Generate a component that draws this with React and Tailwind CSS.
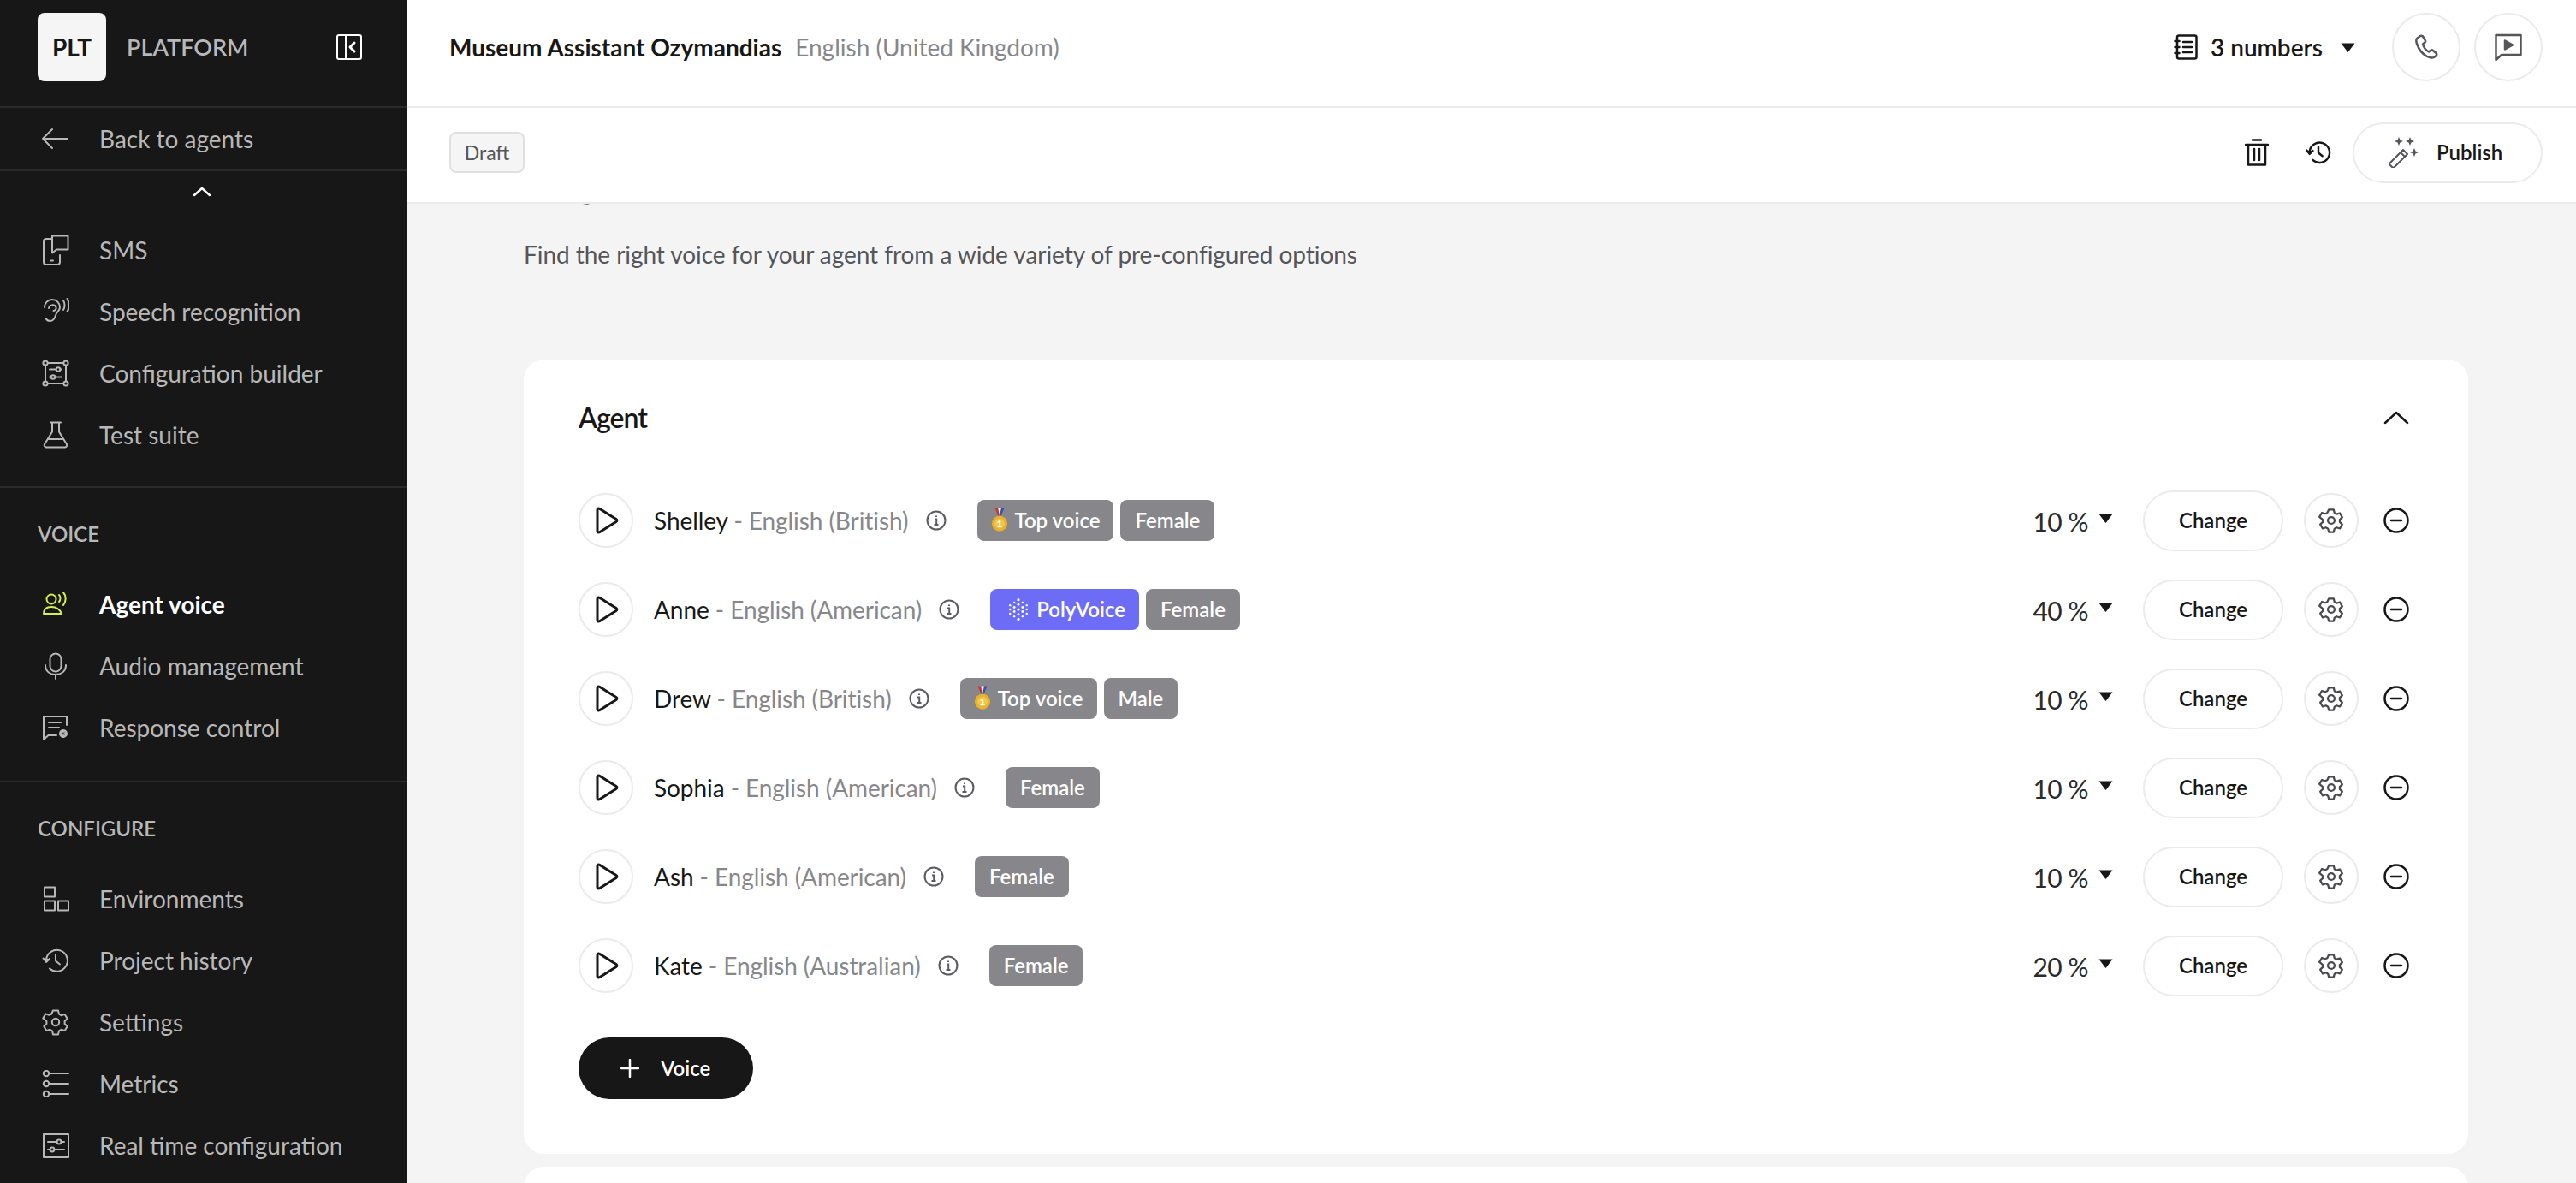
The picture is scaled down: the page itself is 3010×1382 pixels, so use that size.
const Ic = ({ w = 32, h = 32, vb, className = "", sw = 2, children }) => (
  <svg width={w} height={h} viewBox={vb || `0 0 ${w} ${h}`} fill="none" stroke="currentColor" strokeWidth={sw} strokeLinecap="round" strokeLinejoin="round" className={"shrink-0 " + className}>
    {children}
  </svg>
);

const Cog = ({ size = 32, sw = 2 }) => (
  <Ic w={size} h={size} vb="0 0 32 32" sw={sw}>
    <path d="M13 2.500h6l1 4.200 2.600 1.500 4.100-1.300 3 5.200-3.100 2.900v3l3.100 2.900-3 5.200-4.100-1.300-2.600 1.500-1 4.200h-6l-1-4.200-2.600-1.500-4.100 1.300-3-5.200 3.100-2.900v-3L1.300 11.600l3-5.200 4.100 1.300L11 6.700z" />
    <circle cx="16" cy="16" r="4.200" />
  </Ic>
);
const HistoryI = ({ size = 32, sw = 2 }) => (
  <Ic w={size} h={size} vb="0 0 32 32" sw={sw}>
    <path d="M5 15a12.500 12.500 0 1 1 4 10.500" />
    <path d="M1.500 13.500 5 18l4-4" fill="currentColor" />
    <path d="M16 9v7.500l5 4" />
  </Ic>
);

const navIcons = {
  sms: (
    <Ic vb="0 0 32 36" h={36}>
      <path d="M11 5H5a3 3 0 0 0-3 3v24a3 3 0 0 0 3 3h13a3 3 0 0 0 3-3v-8" />
      <path d="M12 1.500h18.500v16H17l-5 4z" />
      <path d="M10 30.500h3" />
    </Ic>
  ),
  ear: (
    <Ic>
      <path d="M3 11a9 9 0 0 1 18 0c0 4-3.500 5.500-4.500 8-1 3-2 8-7 8-2.500 0-4-1-5-3" />
      <path d="M8 12a4.500 4.500 0 0 1 8.500-1c.8 2-1 3.500-3 4" />
      <path d="M25 3c2 3 2 8 0 11" />
      <path d="M29.500 1c3 4.500 3 11 0 15" />
    </Ic>
  ),
  config: (
    <Ic>
      <rect x="4" y="4" width="24" height="24" />
      <g fill="#171717">
        <circle cx="4" cy="4" r="2.600" /><circle cx="28" cy="4" r="2.600" /><circle cx="4" cy="28" r="2.600" /><circle cx="28" cy="28" r="2.600" />
      </g>
      <path d="M9 11.500h14M9 20.500h14" />
      <circle cx="19" cy="11.500" r="2.300" fill="#171717" /><circle cx="13" cy="20.500" r="2.300" fill="#171717" />
    </Ic>
  ),
  flask: (
    <Ic>
      <path d="M10 1.500h12M12 1.500v11L3 27a2.500 2.500 0 0 0 2 3.500h22a2.500 2.500 0 0 0 2-3.500l-9-14.500v-11" />
      <path d="M7.500 21h17" />
    </Ic>
  ),
  agent: (
    <Ic>
      <circle cx="11" cy="10" r="5.500" />
      <path d="M2 27c0-5 2-8 9-8s10 3 12 8z" />
      <path d="M20 5c2 2 2 6 0 8" />
      <path d="M25 2c3.500 4 3.500 11 0 15" />
    </Ic>
  ),
  mic: (
    <Ic>
      <rect x="9.500" y="1.500" width="13" height="21" rx="6.500" />
      <path d="M4 15c0 7 5 11 12 11s12-4 12-11M16 26v5" />
    </Ic>
  ),
  resp: (
    <Ic>
      <path d="M29 13V3H2v27l5.500-5H17" />
      <path d="M8 10h14M8 16h12" />
      <circle cx="25" cy="23" r="3.500" strokeWidth="3" strokeDasharray="2 1" />
      <circle cx="25" cy="23" r="1.500" strokeWidth="1" />
    </Ic>
  ),
  env: (
    <Ic>
      <rect x="3" y="2.500" width="12" height="11" /><rect x="3" y="18.500" width="12" height="11" /><rect x="19" y="18.500" width="12" height="11" />
    </Ic>
  ),
  hist: <HistoryI />,
  cog: <Cog />,
  metrics: (
    <Ic>
      <circle cx="5" cy="4" r="3.200" /><circle cx="5" cy="16" r="3.200" /><circle cx="5" cy="28" r="3.200" />
      <path d="M10 4h21M10 16h21M10 28h21" />
    </Ic>
  ),
  rt: (
    <Ic>
      <rect x="2" y="3" width="29" height="27" />
      <path d="M7 12h19M7 21h19" />
      <circle cx="20" cy="12" r="2.400" fill="#171717" /><circle cx="12" cy="21" r="2.400" fill="#171717" />
    </Ic>
  ),
};

const NavItem = ({ icon, label, active }) => (
  <div className={"flex items-center h-[72px] pl-[49px] text-[28px] " + (active ? "text-white font-bold" : "text-[#b8b8b8]")}>
    <span className={"w-[67px] flex items-center " + (active ? "text-[#d4ee4e]" : "")}>{navIcons[icon]}</span>
    <span>{label}</span>
  </div>
);

const Section = ({ title, children }) => (
  <div className="border-t-2 border-[#2a2a2a] pb-[26px]">
    <div className="flex items-center h-[100px] pt-[8px] pl-[44px] text-[24px] font-semibold text-[#b8b8b8]">{title}</div>
    {children}
  </div>
);

const Caret = ({ className = "" }) => (
  <svg width="17" height="11" viewBox="0 0 17 11" className={"shrink-0 " + className}>
    <path d="M0.500 0.500h16L9 10.500a.7.700 0 0 1-1 0z" fill="#171717" />
  </svg>
);

const Medal = () => (
  <svg width="20" height="30" viewBox="0 0 22 32" className="shrink-0">
    <path d="M5 0h4l3 10h-3z" fill="#c33" />
    <path d="M17 0h-4l-2 10h2z" fill="#35a" />
    <path d="M9 0h4l-2 10z" fill="#eee" />
    <circle cx="11" cy="20" r="10" fill="#e8b02c" />
    <circle cx="11" cy="20" r="6.500" fill="#f2c648" />
    <text x="11" y="25" fontSize="13" fontWeight="700" textAnchor="middle" fill="#fff" fontFamily="Lato, sans-serif">1</text>
  </svg>
);

const Poly = () => {
  const pts = [[18,2,2],[18,9,1.8],[18,16,2],[18,23,1.8],[18,30,2],[12,6,1.5],[24,6,1.5],[12,13,1.8],[24,13,1.8],[12,19,1.8],[24,19,1.8],[12,26,1.5],[24,26,1.5],[6,10,1.5],[30,10,1.5],[6,22,1.5],[30,22,1.5],[6,16,1.5],[30,16,1.5]];
  return (
    <svg width="26" height="32" viewBox="2 0 32 32" className="shrink-0">
      {pts.map(([x, y, r], i) => <circle key={i} cx={x} cy={y} r={r} fill="#fff" />)}
    </svg>
  );
};

const Badge = ({ kind, children }) => (
  <span className={"flex items-center h-[48px] rounded-[8px] text-white font-semibold text-[24px] " + (kind === "poly" ? "bg-[#6c6cf6] pl-[20px] pr-[16px] gap-[8px]" : kind === "top" ? "bg-[#87878b] pl-[16px] pr-[16px] gap-[8px]" : "bg-[#87878b] px-[17px]")}>
    {kind === "top" && <Medal />}
    {kind === "poly" && <Poly />}
    {children}
  </span>
);

const voices = [
  { name: "Shelley", lang: "English (British)", badges: [["top", "Top voice"], ["", "Female"]], pct: "10 %" },
  { name: "Anne", lang: "English (American)", badges: [["poly", "PolyVoice"], ["", "Female"]], pct: "40 %" },
  { name: "Drew", lang: "English (British)", badges: [["top", "Top voice"], ["", "Male"]], pct: "10 %" },
  { name: "Sophia", lang: "English (American)", badges: [["", "Female"]], pct: "10 %" },
  { name: "Ash", lang: "English (American)", badges: [["", "Female"]], pct: "10 %" },
  { name: "Kate", lang: "English (Australian)", badges: [["", "Female"]], pct: "20 %" },
];

const Row = ({ v }) => (
  <div className="flex items-center h-[104px]">
    <div className="w-[64px] h-[64px] rounded-full border-2 border-[#ebebeb] flex items-center justify-center shrink-0 text-[#171717]">
      <svg width="28" height="32" viewBox="0 0 28 32" fill="none" stroke="currentColor" strokeWidth="3" strokeLinejoin="round" className="ml-[2px]">
        <path d="M3 3.500c0-1.500 1.500-2 2.500-1.200L25 14.500c1.200.8 1.200 2.200 0 3L5.500 29.700C4.500 30.500 3 30 3 28.500z" />
      </svg>
    </div>
    <div className="ml-[24px] text-[28px] text-[#171717] whitespace-nowrap tracking-[-0.07px]">
      {v.name} <span className="text-[#87878b]">- {v.lang}</span>
    </div>
    <svg width="24" height="24" viewBox="0 0 24 24" fill="none" stroke="#5c5c60" strokeWidth="2" className="ml-[20px] shrink-0">
      <circle cx="12" cy="12" r="10.500" />
      <path d="M10 10.500h2.200v6.500M9.500 17h5M12 6.500v1.500" />
    </svg>
    <div className="ml-[36px] flex gap-[8px]">
      {v.badges.map(([k, t]) => <Badge key={t} kind={k}>{t}</Badge>)}
    </div>
    <div className="ml-auto flex items-center">
      <span className="text-[30px] text-[#2b2b2b] mt-[3px] tracking-[-0.5px]">{v.pct}</span>
      <Caret className="ml-[12px] -mt-[5px]" />
      <div className="ml-[35px] w-[164px] h-[71px] rounded-full border-2 border-[#ebebeb] flex items-center justify-center text-[24px] font-semibold text-[#171717]">Change</div>
      <div className="ml-[24px] w-[64px] h-[64px] rounded-full border-2 border-[#ebebeb] flex items-center justify-center text-[#4a4a4e]"><Cog size={30} sw={2.4} /></div>
      <div className="ml-[29px] text-[#171717]">
        <svg width="30" height="30" viewBox="0 0 30 30" fill="none" stroke="currentColor" strokeWidth="2.500" strokeLinecap="round" className="block">
          <circle cx="15" cy="15" r="13.500" /><path d="M9 15h12" />
        </svg>
      </div>
    </div>
  </div>
);

export default function App() {
  return (
    <div className="flex h-screen w-full overflow-hidden bg-[#f4f4f4] font-['Lato','Liberation_Sans',sans-serif]">
      <aside className="w-[476px] shrink-0 bg-[#171717] flex flex-col overflow-hidden">
        <div className="h-[126px] shrink-0 border-b-2 border-[#2a2a2a] flex items-center pl-[44px] pr-[53px] pb-[14px]">
          <div className="w-[80px] h-[80px] rounded-[8px] bg-[#f5f5f5] flex items-center justify-center text-[28px] font-bold text-[#171717]">PLT</div>
          <span className="ml-[24px] text-[27px] font-semibold text-[#b8b8b8]">PLATFORM</span>
          <svg width="30" height="30" viewBox="0 0 30 30" fill="none" stroke="#fff" strokeWidth="2" strokeLinecap="round" strokeLinejoin="round" className="ml-auto">
            <rect x="1" y="1" width="28" height="28" rx="2" /><path d="M11 1v28" /><path d="M21 10l-5 5 5 5" strokeWidth="3" />
          </svg>
        </div>
        <div className="h-[74px] shrink-0 border-b-2 border-[#2a2a2a] flex items-center pl-[49px] text-[28px] text-[#b8b8b8]">
          <svg width="32" height="26" viewBox="0 0 32 26" fill="none" stroke="currentColor" strokeWidth="2" strokeLinecap="round" strokeLinejoin="round" className="mr-[36px] shrink-0 -ml-[1px]">
            <path d="M31 13H2M13 2 2 13l11 11" />
          </svg>
          <span>Back to agents</span>
        </div>
        <div className="h-[56px] shrink-0 flex items-center justify-center pb-[8px]">
          <svg width="22" height="12" viewBox="0 0 22 12" fill="none" stroke="#fff" strokeWidth="2.500" strokeLinecap="round" strokeLinejoin="round" className="-ml-[4px]"><path d="M2 10l9-8 9 8" /></svg>
        </div>
        <div className="pb-[24px]">
          <NavItem icon="sms" label="SMS" />
          <NavItem icon="ear" label="Speech recognition" />
          <NavItem icon="config" label="Configuration builder" />
          <NavItem icon="flask" label="Test suite" />
        </div>
        <Section title="VOICE">
          <NavItem icon="agent" label="Agent voice" active />
          <NavItem icon="mic" label="Audio management" />
          <NavItem icon="resp" label="Response control" />
        </Section>
        <Section title="CONFIGURE">
          <NavItem icon="env" label="Environments" />
          <NavItem icon="hist" label="Project history" />
          <NavItem icon="cog" label="Settings" />
          <NavItem icon="metrics" label="Metrics" />
          <NavItem icon="rt" label="Real time configuration" />
        </Section>
      </aside>

      <main className="flex-1 min-w-0 flex flex-col h-full">
        <div className="h-[126px] shrink-0 bg-white border-b-2 border-[#ebebeb] flex items-center pl-[49px] pr-[39px] pb-[14px]">
          <span className="text-[28px] font-bold text-[#171717]">Museum Assistant Ozymandias</span>
          <span className="ml-[16px] text-[28px] text-[#87878b]">English (United Kingdom)</span>
          <div className="ml-auto flex items-center text-[#171717]">
            <svg width="28" height="30" viewBox="0 0 28 30" fill="none" stroke="currentColor" strokeWidth="2.500" strokeLinecap="round" strokeLinejoin="round">
              <rect x="4" y="1.500" width="22.500" height="27" rx="2" />
              <path d="M11 9h10M11 15h10M11 21h10M1.500 8h5M1.500 15h5M1.500 22h5" />
            </svg>
            <span className="ml-[15px] text-[28px] font-semibold">3 numbers</span>
            <Caret className="ml-[21px]" />
            <div className="ml-[43px] w-[80px] h-[80px] rounded-full border-2 border-[#ebebeb] flex items-center justify-center text-[#55555a]">
              <svg width="28" height="30" viewBox="0 0 28 30" fill="none" stroke="currentColor" strokeWidth="2.500" strokeLinecap="round" strokeLinejoin="round">
                <path d="M3 5c-1 1.500-1 3 0 6 2 6 6.500 12 12 15 3 1.500 6 2 8 1l2.500-2c1-1 1-2 0-3l-3.500-3c-1-.8-2-.8-3 0l-2 1.500c-3-1.500-6-5.500-7-9l2.500-2c.8-1 .8-2 0-3L10 2.500C9 1.500 8 1.500 7 2z" />
              </svg>
            </div>
            <div className="ml-[16px] w-[80px] h-[80px] rounded-full border-2 border-[#ebebeb] flex items-center justify-center text-[#55555a]">
              <svg width="32" height="32" viewBox="0 0 32 32" fill="none" stroke="currentColor" strokeWidth="2.500" strokeLinejoin="round">
                <path d="M1.500 2h29v23H8l-6.500 6z" />
                <path d="M12 8.500l9 5-9 5z" fill="currentColor" />
              </svg>
            </div>
          </div>
        </div>
        <div className="h-[112px] shrink-0 bg-white border-b-2 border-[#ebebeb] flex items-center pl-[49px] pr-[39px] pb-[6px]">
          <span className="w-[88px] h-[48px] rounded-[8px] border-2 border-[#e0e0e0] bg-[#f5f5f5] flex items-center justify-center text-[23px] text-[#55555a]">Draft</span>
          <div className="ml-auto flex items-center text-[#171717]">
            <svg width="28" height="32" viewBox="0 0 28 32" fill="none" stroke="currentColor" strokeWidth="2.500" strokeLinecap="round" strokeLinejoin="round">
              <path d="M1 7h26M9 1.500h10M4 7v23.500h20V7M11 12v13M17 12v13" />
            </svg>
            <span className="ml-[43px]"><HistoryI size={30} sw={2.6} /></span>
            <div className="ml-[25px] w-[222px] h-[71px] rounded-full border-2 border-[#ebebeb] flex items-center pl-[40px] text-[#171717]">
              <svg width="36" height="36" viewBox="0 0 36 36" className="shrink-0 text-[#55555a]" fill="none" stroke="currentColor" strokeWidth="2" strokeLinejoin="round">
                <path d="M2 30l15-15 5 5-15 15a2 2 0 0 1-3 0l-2-2a2 2 0 0 1 0-3z" />
                <path d="M14 18l5 5" />
                <path d="M12 0l1.500 3.500 3.500 1.500-3.500 1.500-1.500 3.500-1.500-3.500-3.500-1.500 3.500-1.500zM25 0l1.500 3.500 3.500 1.500-3.500 1.500-1.500 3.500-1.500-3.500-3.500-1.500 3.500-1.500zM30 13l1.500 3.500 3.500 1.500-3.500 1.500-1.500 3.500-1.500-3.500-3.500-1.500 3.500-1.500z" fill="currentColor" stroke="none" />
              </svg>
              <span className="ml-[20px] text-[24px] font-semibold">Publish</span>
            </div>
          </div>
        </div>

        <div className="flex-1 min-h-0 overflow-hidden pl-[136px] pr-[126px]">
          <div className="pl-[35px] text-[40px] font-bold text-[#171717] leading-[48px] -mt-[46px]">Agent voice</div>
          <p className="mt-[37px] text-[28px] text-[#55555a] leading-[40px] tracking-[-0.05px]">Find the right voice for your agent from a wide variety of pre-configured options</p>
          <section className="mt-[103px] bg-white rounded-[24px] pl-[64px] pr-[69px] pb-[64px]">
            <div className="h-[136px] flex items-center justify-between">
              <h2 className="text-[32px] font-semibold text-[#171717] tracking-[-1px]">Agent</h2>
              <svg width="30" height="18" viewBox="0 0 30 18" fill="none" stroke="#171717" strokeWidth="2.500" strokeLinecap="round" strokeLinejoin="round"><path d="M2 15L15 3l13 12" /></svg>
            </div>
            {voices.map((v) => <Row key={v.name} v={v} />)}
            <div className="mt-[32px] w-[204px] h-[72px] rounded-full bg-[#171717] text-white flex items-center pl-[49px]">
              <svg width="22" height="22" viewBox="0 0 22 22" stroke="currentColor" strokeWidth="2.500" strokeLinecap="round"><path d="M11 1v20M1 11h20" /></svg>
              <span className="ml-[25px] text-[24px] font-semibold">Voice</span>
            </div>
          </section>
          <div className="mt-[15px] h-[200px] bg-white rounded-[24px]"></div>
        </div>
      </main>
    </div>
  );
}
